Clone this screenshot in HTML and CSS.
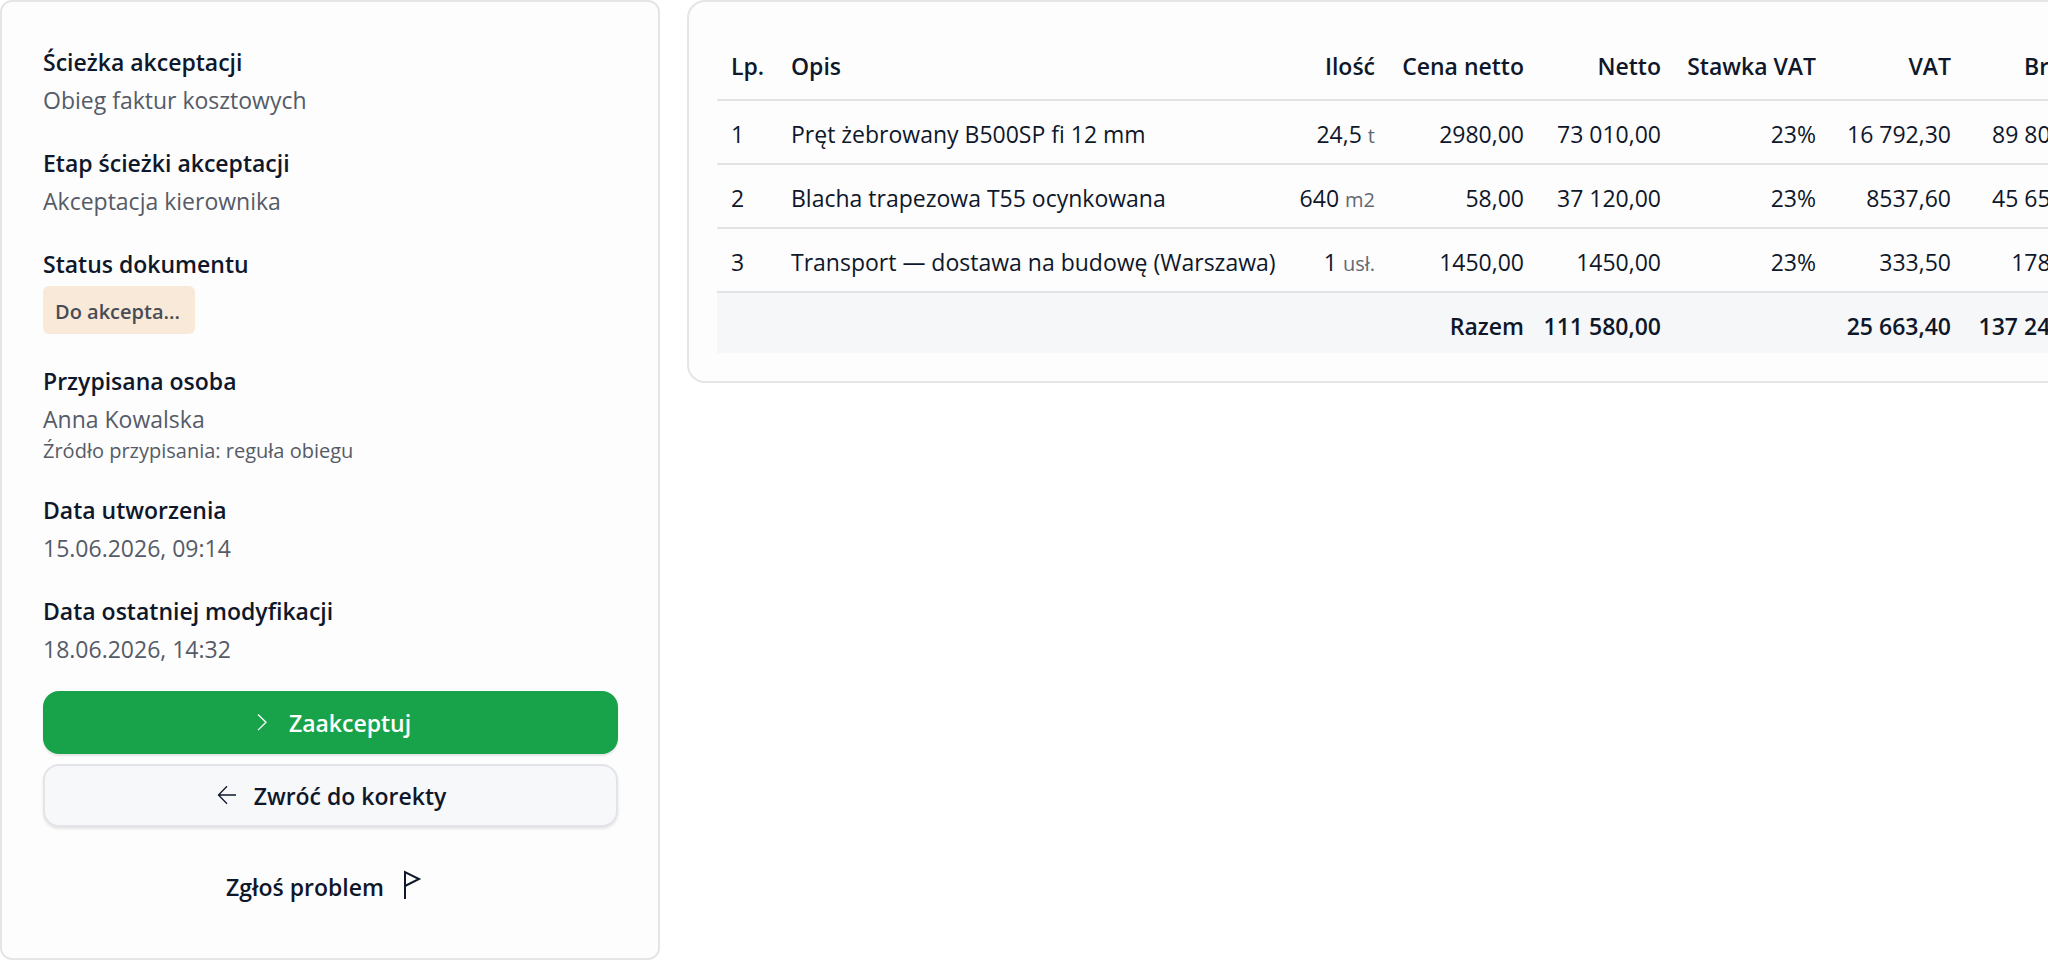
FILE: index.html
```html
<!DOCTYPE html>
<html lang="pl">
  <head>
    <meta charset="UTF-8" />
    <meta name="viewport" content="width=device-width, initial-scale=1.0" />
    <title>Akceptacja faktury</title>
    <link rel="stylesheet" href="styles.css">
  </head>
  <body>
    <div class="layout">
      <aside class="card sidebar">
        <dl class="fields">
          <div class="field">
            <dt>Ścieżka akceptacji</dt>
            <dd>Obieg faktur kosztowych</dd>
          </div>
          <div class="field">
            <dt>Etap ścieżki akceptacji</dt>
            <dd>Akceptacja kierownika</dd>
          </div>
          <div class="field">
            <dt>Status dokumentu</dt>
            <dd class="status"><span class="badge">Do akcepta...</span></dd>
          </div>
          <div class="field">
            <dt>Przypisana osoba</dt>
            <dd>Anna Kowalska</dd>
            <dd class="source">Źródło przypisania: reguła obiegu</dd>
          </div>
          <div class="field">
            <dt>Data utworzenia</dt>
            <dd>15.06.2026, 09:14</dd>
          </div>
          <div class="field">
            <dt>Data ostatniej modyfikacji</dt>
            <dd>18.06.2026, 14:32</dd>
          </div>
        </dl>

        <div class="actions">
          <button type="button" class="btn btn-accept">
            <svg class="icon" viewBox="0 0 24 24"><path d="M8 3.5l8 7.8-8 7.8" /></svg>
            Zaakceptuj
          </button>
          <button type="button" class="btn btn-return">
            <svg class="icon" viewBox="0 0 24 24"><path d="M21 11H3.500M12 2.300L3.500 11l8.500 8.700" /></svg>
            Zwróć do korekty
          </button>
        </div>
        <button type="button" class="btn btn-report">
          Zgłoś problem
          <svg class="icon-flag" viewBox="0 0 36 36"><path d="M6 30V3l14 7-14 7" /></svg>
        </button>
      </aside>

      <main class="card invoice">
        <table class="items">
          <colgroup>
            <col class="col-lp">
            <col class="col-desc">
            <col class="col-qty">
            <col class="col-price">
            <col class="col-net">
            <col class="col-rate">
            <col class="col-vat">
            <col class="col-gross">
          </colgroup>
          <thead>
            <tr>
              <th class="left">Lp.</th>
              <th class="left">Opis</th>
              <th>Ilość</th>
              <th>Cena netto</th>
              <th>Netto</th>
              <th>Stawka VAT</th>
              <th>VAT</th>
              <th>Brutto</th>
            </tr>
          </thead>
          <tbody>
            <tr>
              <td class="left">1</td>
              <td class="left">Pręt żebrowany B500SP fi 12 mm</td>
              <td>24,5 <span class="unit">t</span></td>
              <td>2980,00</td>
              <td>73 010,00</td>
              <td>23%</td>
              <td>16 792,30</td>
              <td>89 802,30</td>
            </tr>
            <tr>
              <td class="left">2</td>
              <td class="left">Blacha trapezowa T55 ocynkowana</td>
              <td>640 <span class="unit">m2</span></td>
              <td>58,00</td>
              <td>37 120,00</td>
              <td>23%</td>
              <td>8537,60</td>
              <td>45 657,60</td>
            </tr>
            <tr>
              <td class="left">3</td>
              <td class="left">Transport — dostawa na budowę (Warszawa)</td>
              <td>1 <span class="unit">usł.</span></td>
              <td>1450,00</td>
              <td>1450,00</td>
              <td>23%</td>
              <td>333,50</td>
              <td>1783,50</td>
            </tr>
          </tbody>
          <tfoot>
            <tr>
              <td colspan="4">Razem</td>
              <td>111 580,00</td>
              <td></td>
              <td>25 663,40</td>
              <td>137 243,40</td>
            </tr>
          </tfoot>
        </table>
      </main>
    </div>
  </body>
</html>
```
FILE: styles.css
```css
* {
  box-sizing: border-box;
}

body {
  margin: 0;
  background: #fff;
  color: #0f172a;
  font-family: "Open Sans", "Noto Sans", sans-serif;
  font-size: 23px;
  line-height: 36px;
}

.layout {
  display: flex;
  align-items: flex-start;
  gap: 27px;
  overflow-x: hidden;
}

.card {
  background: #fdfdfd;
  border: 2px solid #e4e5e7;
}

/* sidebar */
.sidebar {
  flex: 0 0 660px;
  padding: 42px 40px 40px 41px;
  border-radius: 12px;
}

.fields {
  display: flex;
  flex-direction: column;
  gap: 27px;
  margin: 0 0 24px;
}

dt {
  margin-bottom: 2px;
  font-weight: 600;
}

dd {
  margin: 0;
  color: #555b67;
}

.source {
  font-size: 20px;
  line-height: 28px;
}

.status {
  padding: 2px 0;
}

.badge {
  display: block;
  width: fit-content;
  padding: 8px 15px 4px 12px;
  border-radius: 6px;
  background: #f9e9d9;
  color: #484c55;
  font-size: 20px;
  font-weight: 600;
}

.actions {
  display: flex;
  flex-direction: column;
  gap: 10px;
  margin-bottom: 28px;
}

.btn {
  display: flex;
  align-items: center;
  justify-content: center;
  gap: 15px;
  width: 100%;
  height: 63px;
  padding: 0;
  border: 2px solid transparent;
  border-radius: 16px;
  background: transparent;
  color: #0f172a;
  font: inherit;
  font-weight: 600;
  cursor: pointer;
}

.btn-accept {
  border-color: #18a34a;
  background: #18a34a;
  color: #fff;
  box-shadow: 0 2px 2px #0000001a;
}

.btn-return {
  border-color: #e2e4e8;
  background: #f7f8fa;
  box-shadow: 0 2px 3px #0000001a;
}

.icon,
.icon-flag {
  width: 24px;
  height: 24px;
  fill: none;
  stroke: currentColor;
  stroke-width: 1.3;
}

.icon-flag {
  width: 36px;
  height: 36px;
  stroke-width: 2;
}

/* invoice lines */
.invoice {
  flex: 1 0 auto;
  padding: 28px;
  border-radius: 18px;
}

.items {
  border-collapse: collapse;
  white-space: nowrap;
}

.col-lp { width: 60px; }
.col-desc { width: 509px; }
.col-qty { width: 103px; }
.col-price { width: 149px; }
.col-net { width: 137px; }
.col-rate { width: 155px; }
.col-vat { width: 135px; }
.col-gross { width: 145px; }

/* right-aligned cells keep a small left padding so wide sums fit the column */
.items th,
.items td {
  padding: 15px 14px 11px 4px;
  border-bottom: 2px solid #e2e3e5;
  text-align: right;
}

.items th {
  padding-top: 18px;
  padding-bottom: 15px;
  font-weight: 600;
}

.items .left {
  padding-left: 14px;
  padding-right: 4px;
  text-align: left;
}

.items tfoot td {
  padding-bottom: 9px;
  border-bottom: 0;
  background: #f6f7f9;
  font-weight: 600;
}

.unit {
  color: #626874;
  font-size: 20px;
  line-height: 1;
}
```
